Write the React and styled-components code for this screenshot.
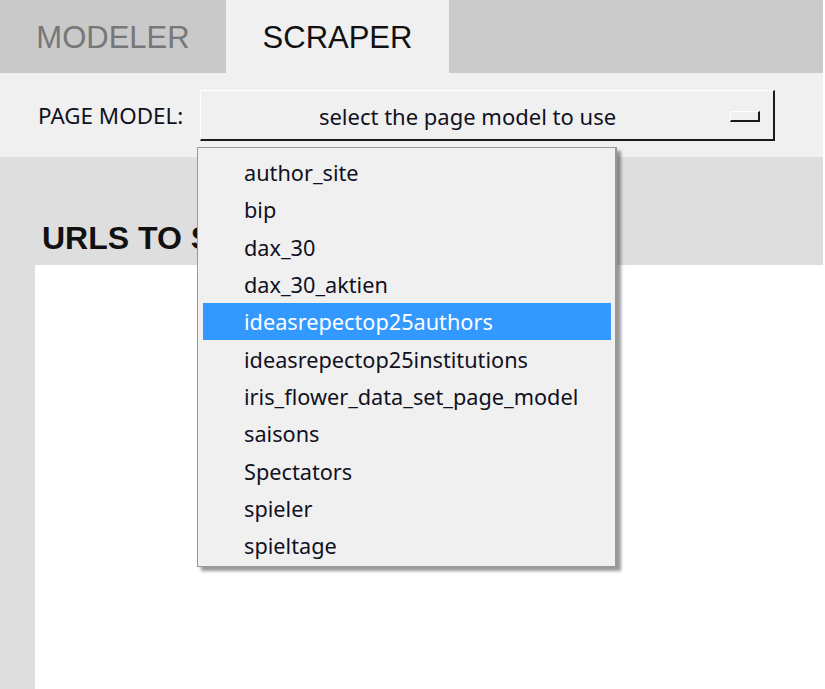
import React from "react";
import styled, { createGlobalStyle } from "styled-components";

const Global = createGlobalStyle`
  html, body { margin: 0; padding: 0; background: #ffffff; }
  body { width: 825px; height: 689px; overflow: hidden; }
`;

const Frame = styled.div`
  position: relative;
  width: 823px;
  height: 689px;
  overflow: hidden;
  display: flex;
  flex-direction: column;
  font-family: "Noto Sans", "Open Sans", sans-serif;
`;

const TabBar = styled.div`
  display: flex;
  height: 73px;
  background: #cbcbcb;
  flex-shrink: 0;
`;

const Tab = styled.div`
  width: ${(p) => p.$w}px;
  display: flex;
  align-items: center;
  justify-content: center;
  background: ${(p) => (p.$active ? "#f0f0f0" : "#c9c9c9")};
  color: ${(p) => (p.$active ? "#111111" : "#777777")};
  font-family: "Liberation Sans", Arial, sans-serif;
  font-size: 31px;
  padding-top: 2px;
  box-sizing: border-box;
`;

const Toolbar = styled.div`
  height: 84px;
  flex-shrink: 0;
  background: #f0f0f0;
  display: flex;
  align-items: center;
  padding-left: 38px;
  gap: 16px;
  padding-bottom: 2px;
  box-sizing: border-box;
`;

const Label = styled.span`
  font-size: 22.4px;
  color: #111122;
  width: 146px;
  white-space: nowrap;
  margin-top: 2px;
`;

const SelectButton = styled.div`
  width: 575px;
  height: 51px;
  box-sizing: border-box;
  display: flex;
  align-items: center;
  background: #f0f0f0;
  border-top: 1px solid #ffffff;
  border-left: 1px solid #ffffff;
  border-right: 2px solid #1b1b1b;
  border-bottom: 2px solid #1b1b1b;
  margin-top: 3px;
`;

const SelectText = styled.span`
  flex: 1;
  text-align: center;
  font-size: 22px;
  color: #111122;
  padding-left: 4px;
  margin-top: 2px;
`;

const Indicator = styled.span`
  width: 30px;
  height: 11px;
  box-sizing: border-box;
  margin-right: 13px;
  margin-top: 3px;
  background: #f0f0f0;
  border-top: 1px solid #ffffff;
  border-left: 1px solid #ffffff;
  border-right: 2px solid #1b1b1b;
  border-bottom: 2px solid #1b1b1b;
`;

const Main = styled.div`
  flex: 1;
  display: flex;
  flex-direction: column;
  background: #dedede;
  padding-left: 35px;
`;

const HeadingBand = styled.div`
  height: 108px;
  flex-shrink: 0;
  display: flex;
  align-items: flex-end;
  padding-left: 7px;
  padding-bottom: 8px;
  box-sizing: border-box;
`;

const Heading = styled.h2`
  margin: 0;
  font-family: "Liberation Sans", Arial, sans-serif;
  font-weight: bold;
  font-size: 32px;
  color: #111111;
  white-space: nowrap;
`;

const Panel = styled.div`
  flex: 1;
  background: #ffffff;
`;

const Menu = styled.ul`
  position: absolute;
  left: 197px;
  top: 147px;
  width: 420px;
  height: 420px;
  box-sizing: border-box;
  margin: 0;
  list-style: none;
  padding: 6px 4px 0 5px;
  background: #f0f0f0;
  border: 1px solid #999999;
  border-right-width: 2px;
  box-shadow: 4px 4px 3px rgba(0, 0, 0, 0.4);
`;

const Item = styled.li`
  height: 37.3px;
  display: flex;
  align-items: center;
  padding-left: 41px;
  font-size: 21.7px;
  color: ${(p) => (p.$selected ? "#ffffff" : "#111122")};
  background: ${(p) => (p.$selected ? "#3399ff" : "transparent")};
  white-space: nowrap;
`;

const items = [
  "author_site",
  "bip",
  "dax_30",
  "dax_30_aktien",
  "ideasrepectop25authors",
  "ideasrepectop25institutions",
  "iris_flower_data_set_page_model",
  "saisons",
  "Spectators",
  "spieler",
  "spieltage",
];

export default function App() {
  return (
    <>
      <Global />
      <Frame>
        <TabBar>
          <Tab $w={226}>MODELER</Tab>
          <Tab $w={223} $active>SCRAPER</Tab>
        </TabBar>
        <Toolbar>
          <Label>PAGE MODEL:</Label>
          <SelectButton>
            <SelectText>select the page model to use</SelectText>
            <Indicator />
          </SelectButton>
        </Toolbar>
        <Main>
          <HeadingBand>
            <Heading>URLS TO SCRAPE:</Heading>
          </HeadingBand>
          <Panel />
        </Main>
        <Menu>
          {items.map((it) => (
            <Item key={it} $selected={it === "ideasrepectop25authors"}>
              {it}
            </Item>
          ))}
        </Menu>
      </Frame>
    </>
  );
}
